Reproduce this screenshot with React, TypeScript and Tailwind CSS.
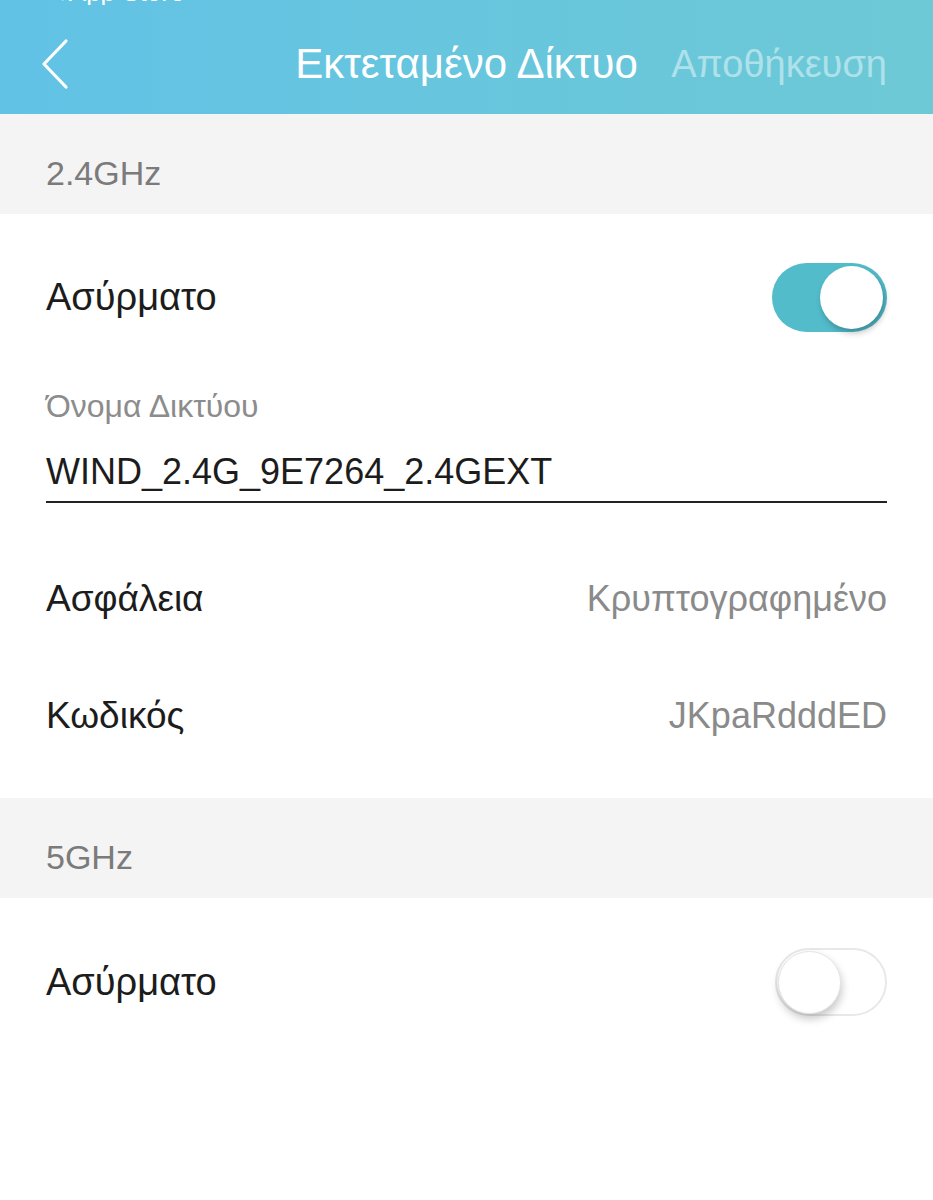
const font = { fontFamily: '"Liberation Sans", Arial, sans-serif' };

const Toggle = ({ on }: { on: boolean }) =>
  on ? (
    <div className="flex h-[69px] w-[115px] items-center justify-end rounded-full bg-[#52bccb] pr-[4px]">
      <div className="h-[63px] w-[63px] rounded-full bg-white shadow-[2px_4px_6px_rgba(0,0,0,0.25)]" />
    </div>
  ) : (
    <div className="flex h-[68px] w-[112px] items-center rounded-full border-2 border-[#e8e8ea] bg-white pl-[1px]">
      <div className="h-[63px] w-[63px] rounded-full border border-[#e4e4e4] bg-white shadow-[1px_5px_8px_rgba(0,0,0,0.22)]" />
    </div>
  );

const SectionHeader = ({ title }: { title: string }) => (
  <div className="h-[100px] bg-[#f4f4f4] px-[46px] pt-[39px] text-[34px] leading-[40px] text-[#7b7b7b]">
    {title}
  </div>
);

const InfoRow = ({ label, value, h }: { label: string; value: string; h: string }) => (
  <div className={`flex items-center justify-between px-[46px] ${h}`}>
    <span className="text-[37px] leading-[40px] text-[#1c1c1c]">{label}</span>
    <span className="text-[36px] leading-[40px] text-[#8a8a8a]">{value}</span>
  </div>
);

export default function App() {
  return (
    <div style={font} className="min-h-[1200px] w-[933px] bg-white">
      {/* Header */}
      <div className="h-[114px] bg-gradient-to-r from-[#62c2e6] to-[#6dc9d5] text-white">
        <div className="h-[5px] overflow-hidden pl-[50px]">
          <div className="-mt-[22px] text-[26px] leading-[28px]">◂ App Store</div>
        </div>
        <div className="grid h-[109px] grid-cols-[1fr_auto_1fr] items-center pt-[9px]">
          <div className="pl-[40px]">
            <svg width="30" height="52" viewBox="0 0 30 52" fill="none">
              <path d="M26 3 L4 26 L26 49" stroke="white" strokeWidth="3.2" strokeLinecap="round" strokeLinejoin="round" />
            </svg>
          </div>
          <div className="text-[42px] leading-[46px]">Εκτεταμένο Δίκτυο</div>
          <div className="pr-[46px] text-right text-[38px] leading-[46px] text-[#aee1ea]">Αποθήκευση</div>
        </div>
      </div>

      <SectionHeader title="2.4GHz" />

      <div className="pb-[23px]">
        <div className="flex h-[166px] items-center justify-between px-[46px]">
          <span className="text-[38px] leading-[40px] text-[#1c1c1c]">Ασύρματο</span>
          <Toggle on />
        </div>
        <div className="flex h-[52px] items-center px-[46px] text-[32px] leading-[36px] text-[#8c8c8c]">
          Όνομα Δικτύου
        </div>
        <div className="mx-[46px] border-b-2 border-[#222] pb-[9px] pt-[20px] text-[36px] leading-[40px] text-[#1c1c1c]">
          WIND_2.4G_9E7264_2.4GEXT
        </div>
        <div className="h-[38px]" />
        <InfoRow label="Ασφάλεια" value="Κρυπτογραφημένο" h="h-[116px]" />
        <InfoRow label="Κωδικός" value="JKpaRdddED" h="h-[118px]" />
      </div>

      <SectionHeader title="5GHz" />

      <div className="flex h-[168px] items-center justify-between px-[46px]">
        <span className="text-[38px] leading-[40px] text-[#1c1c1c]">Ασύρματο</span>
        <Toggle on={false} />
      </div>
    </div>
  );
}
